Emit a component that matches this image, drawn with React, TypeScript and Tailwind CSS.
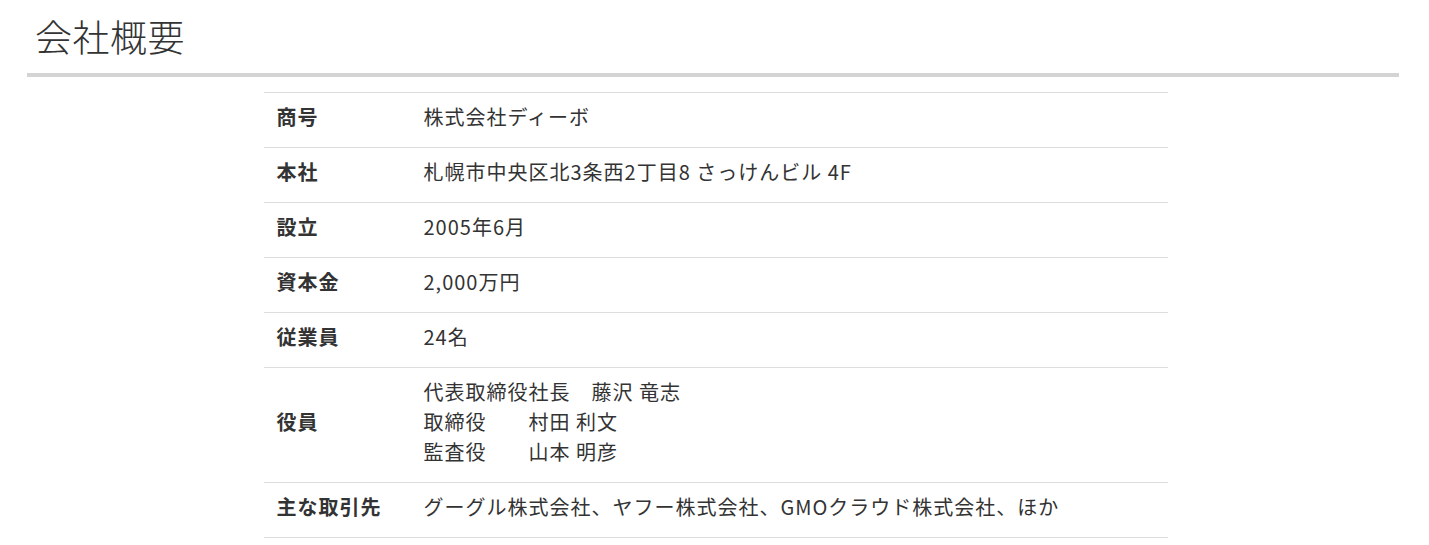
import React from "react";

const rows: { label: string; value: React.ReactNode }[] = [
  { label: "商号", value: "株式会社ディーボ" },
  { label: "本社", value: "札幌市中央区北3条西2丁目8 さっけんビル 4F" },
  { label: "設立", value: "2005年6月" },
  { label: "資本金", value: "2,000万円" },
  { label: "従業員", value: "24名" },
  {
    label: "役員",
    value: (
      <>
        <div>代表取締役社長　藤沢 竜志</div>
        <div>取締役　　村田 利文</div>
        <div>監査役　　山本 明彦</div>
      </>
    ),
  },
  { label: "主な取引先", value: "グーグル株式会社、ヤフー株式会社、GMOクラウド株式会社、ほか" },
];

export default function App() {
  return (
    <div
      className="bg-white text-[#333] min-h-[545px]"
      style={{ fontFamily: '"Noto Sans CJK JP", "Noto Sans", sans-serif' }}
    >
      <div className="ml-[27px] mr-[30px] pt-[10px]">
        <h1 className="pl-[8px] text-[37px] tracking-[0.5px] leading-[52px] font-light h-[67px] border-b-[4px] border-[#d4d4d4]">
          会社概要
        </h1>
        <div className="flex justify-center pt-[15px] pl-[5px]">
          <table className="w-[904px] border-collapse text-[20px] tracking-[1px] leading-[30px]">
            <tbody>
              {rows.map((r) => (
                <tr key={r.label} className="border-y border-[#ddd]">
                  <th className="w-[160px] text-left align-middle font-bold pl-[13px] pt-[9px] pb-[15px]">
                    {r.label}
                  </th>
                  <td className="align-middle pt-[9px] pb-[15px]">{r.value}</td>
                </tr>
              ))}
            </tbody>
          </table>
        </div>
      </div>
    </div>
  );
}
